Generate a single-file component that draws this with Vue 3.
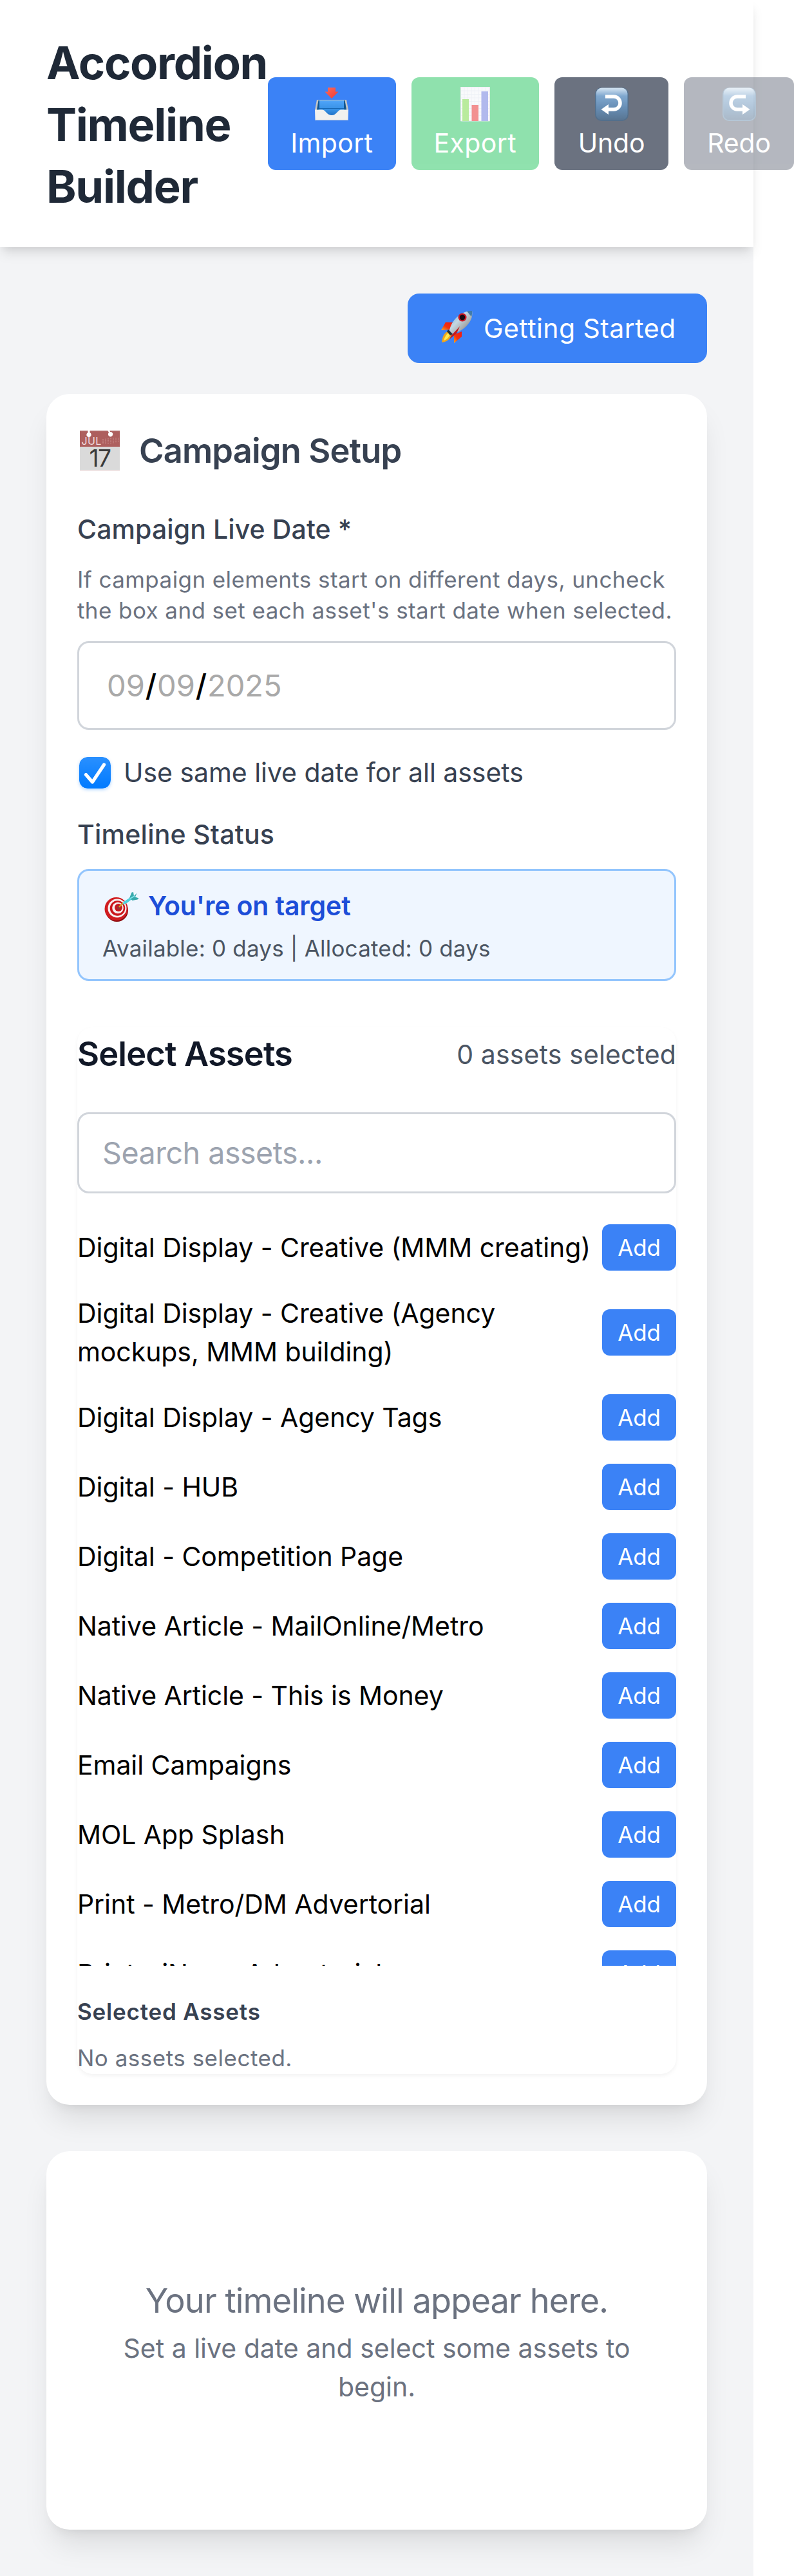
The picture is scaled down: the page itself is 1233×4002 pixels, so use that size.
<script setup>
const assets = [
  'Digital Display - Creative (MMM creating)',
  'Digital Display - Creative (Agency mockups, MMM building)',
  'Digital Display - Agency Tags',
  'Digital - HUB',
  'Digital - Competition Page',
  'Native Article - MailOnline/Metro',
  'Native Article - This is Money',
  'Email Campaigns',
  'MOL App Splash',
  'Print - Metro/DM Advertorial',
  'Print - iNews Advertorial',
]
</script>

<template>
  <div class="page">
    <header class="header">
      <h1 class="title">Accordion Timeline Builder</h1>
      <div class="actions">
        <button class="action import">
          <svg class="glyph" width="54" height="54" viewBox="0 0 54 54">
            <defs>
              <linearGradient id="trayIn" x1="0" y1="0" x2="0" y2="1"><stop offset="0" stop-color="#50a5fa" /><stop offset=".65" stop-color="#348ee2" /><stop offset="1" stop-color="#1d6fc4" /></linearGradient>
              <linearGradient id="arrowRed" x1="0" y1="0" x2="1" y2="1"><stop offset="0" stop-color="#ff6b5a" /><stop offset="1" stop-color="#ee3a36" /></linearGradient>
            </defs>
            <path d="M4 20h46l3 16H1z" fill="#c5c5c3" />
            <path d="M6.500 21h41l2.500 15-14 9H18L4 36z" fill="url(#trayIn)" />
            <path d="M6.500 21L4 36l4-1V21zM47.500 21L50 36l-4-1V21z" fill="#14568f" />
            <path d="M8 33.500h38" stroke="#1768b5" stroke-width="1" />
            <path d="M1 35.500h11c6 0 7 8.500 15 8.500s9-8.500 15-8.500h11L52.500 52h-51z" fill="#f1f1ef" />
            <path d="M1.500 51.500h51" stroke="#d2d2d0" stroke-width="1" />
            <path d="M21 1h12v6.500h4.500L27 18 16.500 7.500H21z" fill="url(#arrowRed)" />
          </svg>
          <span>Import</span>
        </button>
        <button class="action export faded">
          <svg class="glyph" width="54" height="54" viewBox="0 0 54 54">
            <path d="M4.500 0h45v53h-45z" fill="#f5f6fb" stroke="#cdd0d8" />
            <path d="M10 0v53M15.500 0v53M21 0v53M26.500 0v53M32 0v53M37.500 0v53M43 0v53M5 6h44M5 11.500h44M5 17h44M5 22.500h44M5 28h44M5 33.500h44M5 39h44M5 44.500h44" stroke="#dce2ee" stroke-width=".8" />
            <path d="M7 19h10v34H7z" fill="#76d83d" />
            <path d="M21.500 28h10.500v25H21.500z" fill="#e72326" />
            <path d="M36.500 7H47v46H36.500z" fill="#6575dc" />
          </svg>
          <span>Export</span>
        </button>
        <button class="action undo">
          <svg class="glyph" width="54" height="54" viewBox="0 0 54 54">
            <defs>
              <linearGradient id="keyBlue" x1="0" y1="0" x2="0" y2="1"><stop offset="0" stop-color="#d7e6f3" /><stop offset=".25" stop-color="#80a8cf" /><stop offset=".6" stop-color="#688fb6" /><stop offset="1" stop-color="#587592" /></linearGradient>
            </defs>
            <rect x="1" y="1" width="52" height="52" rx="10" fill="#526f8c" />
            <rect x="2.500" y="1.500" width="49" height="50" rx="9" fill="url(#keyBlue)" />
            <path d="M17 15h13a10 10 0 0 1 0 20h-9" fill="none" stroke="#fff" stroke-width="5.500" />
            <path d="M10.500 35L22 27v16z" fill="#fff" />
          </svg>
          <span>Undo</span>
        </button>
        <button class="action undo faded">
          <svg class="glyph" width="54" height="54" viewBox="0 0 54 54">
            <rect x="1" y="1" width="52" height="52" rx="10" fill="#6f92b2" />
            <rect x="2.500" y="1.500" width="49" height="50" rx="9" fill="url(#keyBlue)" />
            <path d="M37 15H24a10 10 0 0 0 0 20h9" fill="none" stroke="#fff" stroke-width="5.500" />
            <path d="M43.500 35L32 27v16z" fill="#fff" />
          </svg>
          <span>Redo</span>
        </button>
      </div>
    </header>

    <main class="main">
      <button class="start">
        <svg width="56" height="54" viewBox="0 0 56 54">
          <defs>
            <linearGradient id="hull" x1="0" y1="0" x2="1" y2="1"><stop offset="0" stop-color="#5d9dd0" /><stop offset=".4" stop-color="#c4d7e2" /><stop offset=".65" stop-color="#a9adae" /><stop offset="1" stop-color="#39566d" /></linearGradient>
            <linearGradient id="fin" x1="1" y1="0" x2="0" y2="1"><stop offset="0" stop-color="#f01812" /><stop offset=".6" stop-color="#f2330d" /><stop offset="1" stop-color="#ffb01c" /></linearGradient>
          </defs>
          <path d="M23 19L9 18.500 2 31l14-1z" fill="url(#fin)" />
          <path d="M34 33v8L22 51V38z" fill="url(#fin)" />
          <path d="M15 32c-8 2-11 8-12 18 8-1 14-5 16-14z" fill="#f0a51c" />
          <path d="M15 34c-5 3-7 7-9 13 6-2 9-6 11-12z" fill="#ffea50" />
          <path d="M15 31C18 16 32 1 50 1c3 15-11 31-31 36z" fill="url(#hull)" />
          <path d="M42 1.500c3-.7 5-.5 8-.5.500 3 0 6-1 9z" fill="#3f7cae" />
          <path d="M13 30l7 7-4 2-5-6z" fill="#222f3b" />
          <path d="M31 25L18 39l-3 6 11-9z" fill="#c5191a" />
          <circle cx="35" cy="11" r="6.500" fill="#c91622" />
          <circle cx="35" cy="11" r="4.200" fill="#180a12" />
        </svg>
        <span>Getting Started</span>
      </button>

      <section class="card">
        <h2 class="heading setup">
          <svg width="64" height="64" viewBox="0 0 64 64">
            <path d="M1 1h62v62H1z" fill="#dadada" />
            <path d="M1 1h62v25H1z" fill="#ad5f5e" />
            <path d="M1 1h62M1 62.500h62" stroke="#e2cccc" />
            <path d="M13.500 0h3v4a3.700 3.700 0 1 1-3 0zM44 0h3l1 3a3.700 3.700 0 1 1-2 1z" fill="#fff" />
            <path d="M37 14v8M41 13.500v8.500M45 13v9M49 12.500v9M53 12v8.500M57 12v7.500M61 12v6" stroke="#c98c8b" stroke-width="1.300" stroke-dasharray="1.500 .9" />
            <text x="3.500" y="22.500" class="month">JUL</text>
            <text x="32" y="56.500" text-anchor="middle" class="day">17</text>
          </svg>
          <span>Campaign Setup</span>
        </h2>

        <div class="label">Campaign Live Date *</div>
        <p class="help">If campaign elements start on different days, uncheck<br />the box and set each asset's start date when selected.</p>
        <div class="date"><span>09</span><b>/</b><span>09</span><b>/</b><span>2025</span></div>

        <div class="check-row">
          <svg class="check" width="49" height="49" viewBox="0 0 49 49">
            <defs>
              <linearGradient id="box" x1="0" y1="0" x2="0" y2="1"><stop offset="0" stop-color="#2a90ff" /><stop offset="1" stop-color="#007aff" /></linearGradient>
            </defs>
            <rect width="49" height="49" rx="13" fill="url(#box)" />
            <path d="M10.500 27.500L20.500 39 38.500 12" fill="none" stroke="#fff" stroke-width="5.200" stroke-linecap="round" stroke-linejoin="round" />
          </svg>
          <span>Use same live date for all assets</span>
        </div>

        <div class="label status-label">Timeline Status</div>
        <div class="status">
          <div class="status-title">
            <svg width="54" height="48" viewBox="0 0 54 48">
              <circle cx="19.500" cy="29.500" r="17.500" fill="#8d0d12" />
              <circle cx="18.500" cy="27" r="18" fill="#d01c20" />
              <circle cx="20" cy="26" r="14.500" fill="#f7eeee" />
              <circle cx="20.500" cy="26" r="11.800" fill="#cb161b" />
              <circle cx="21" cy="25.500" r="8.800" fill="#f7eeee" />
              <circle cx="22" cy="25" r="6" fill="#cb161b" />
              <circle cx="22.500" cy="25" r="3.200" fill="#9f3236" />
              <path d="M23 24l6-6" stroke="#d9a620" stroke-width="2.200" />
              <path d="M28 20.500L30 16l12-8 2 3-9 7z" fill="#4fd0dc" />
              <path d="M39 10L42.500 1.500 45 1l1 6 4.500-4.500L48 8.500l5.500 2-2 2-8 1.500z" fill="#37a9ac" />
              <path d="M40 11l7-4" stroke="#7de4ea" stroke-width="2" />
            </svg>
            <span>You're on target</span>
          </div>
          <div class="status-detail">Available: 0 days | Allocated: 0 days</div>
        </div>

        <div class="assets">
          <div class="assets-head">
            <h3 class="heading dark">Select Assets</h3>
            <span class="count">0 assets selected</span>
          </div>
          <div class="search">Search assets...</div>
          <ul class="list">
            <li v-for="name in assets" :key="name" class="row">
              <span class="name">{{ name }}</span>
              <button class="add">Add</button>
            </li>
          </ul>
          <h4 class="selected-title">Selected Assets</h4>
          <p class="none">No assets selected.</p>
        </div>
      </section>

      <section class="card empty">
        <p class="empty-title">Your timeline will appear here.</p>
        <p class="empty-text">Set a live date and select some assets to begin.</p>
      </section>
    </main>
  </div>
</template>

<style>
body {
  margin: 0;
  background: #fff;
}
</style>

<style scoped>
* {
  box-sizing: border-box;
}
.page {
  width: 1170px;
  height: 4002px;
  background: #f3f4f6;
  font-family: Inter, "Liberation Sans", sans-serif;
  font-size: 41px;
  line-height: 60px;
  color: #000;
}
h1, h2, h3, h4, p, ul {
  margin: 0;
  padding: 0;
}
svg {
  display: block;
  flex: none;
}
button {
  border: 0;
  padding: 0;
  margin: 0;
  font: inherit;
  color: #fff;
  background: #3b82f6;
  flex: none;
}
.header {
  position: relative;
  display: flex;
  align-items: center;
  height: 384px;
  padding: 48px 72px;
  background: #fff;
  box-shadow: 0 12px 18px -3px rgba(0, 0, 0, .1), 0 6px 12px -6px rgba(0, 0, 0, .1);
}
.title {
  flex: 0 0 344px;
  padding-top: 3px;
  font-size: 70.500px;
  line-height: 96px;
  font-weight: 700;
  letter-spacing: -1.300px;
  color: #1f2937;
}
.actions {
  display: flex;
  gap: 24px;
  flex: none;
}
.action {
  display: flex;
  flex-direction: column;
  align-items: center;
  width: 198.500px;
  height: 144px;
  padding: 12px 0;
  border-radius: 12px;
  letter-spacing: .35px;
}
.action .glyph {
  margin: 3px 0;
}
.export {
  background: #22c55e;
}
.undo {
  width: 177px;
  background: #6b7280;
  letter-spacing: -.2px;
}
.undo.faded {
  width: 171px;
}
.faded {
  opacity: .5;
}
.main {
  display: flex;
  flex-direction: column;
  padding: 72px;
}
.start {
  align-self: flex-end;
  display: flex;
  align-items: center;
  width: 465px;
  height: 108px;
  padding: 0 48px;
  margin-bottom: 48px;
  border-radius: 18px;
  letter-spacing: .42px;
}
.start svg {
  margin: -2px 12px 0 2px;
}
.start span {
  white-space: nowrap;
}
.card {
  padding: 48px;
  border-radius: 36px;
  background: #fff;
  box-shadow: 0 30px 45px -9px rgba(0, 0, 0, .1), 0 12px 18px -12px rgba(0, 0, 0, .1);
}
.heading {
  font-size: 52.400px;
  line-height: 84px;
  font-weight: 600;
  letter-spacing: -.85px;
}
.setup {
  display: flex;
  align-items: center;
  gap: 29px;
  height: 84px;
  padding-left: 3px;
  margin-bottom: 48px;
  color: #374151;
}
.setup span {
  margin-top: -4px;
}
.setup svg {
  margin-top: -4px;
}
.month {
  font: 400 16px Inter, sans-serif;
  letter-spacing: .4px;
  fill: #f3dede;
}
.day {
  font: 400 37px Inter, sans-serif;
  letter-spacing: -1.500px;
  fill: #3a3a3a;
}
.label {
  font-weight: 500;
  letter-spacing: .1px;
  color: #374151;
}
.help {
  margin: 24px 0;
  font-size: 35px;
  line-height: 48px;
  letter-spacing: .42px;
  white-space: nowrap;
  color: #6b7280;
}
.date {
  display: flex;
  align-items: center;
  height: 138px;
  padding-left: 43px;
  border: 3px solid #d1d5db;
  border-radius: 18px;
  font-size: 47px;
  color: #a9a9a9;
}
.date b {
  width: 19px;
  text-align: center;
  font-weight: 500;
  color: #000;
}
.date span {
  width: 59px;
}
.check-row {
  display: flex;
  align-items: center;
  gap: 20px;
  height: 60px;
  margin: 36px 0;
  padding-left: 3px;
  color: #374151;
}
.check {
  border-radius: 13px;
  box-shadow: 0 2px 5px rgba(0, 122, 255, .3);
}
.check-row span {
  letter-spacing: -.05px;
}
.status-label {
  letter-spacing: .24px;
}
.status {
  height: 174px;
  margin: 24px 0 72px;
  padding: 24px 36px;
  border: 3px solid #93c5fd;
  border-radius: 18px;
  background: #eff6ff;
}
.status-title {
  display: flex;
  align-items: center;
  gap: 14px;
  height: 60px;
  padding-left: 3px;
  font-weight: 600;
  letter-spacing: -.15px;
  color: #1d4ed8;
}
.status-title svg {
  margin-top: 4px;
}
.status-detail {
  margin-top: 12px;
  font-size: 35px;
  line-height: 48px;
  letter-spacing: .2px;
  color: #4b5563;
}
.assets {
  height: 1626px;
  border-radius: 24px;
  background: #fff;
  box-shadow: 0 3px 6px rgba(0, 0, 0, .05);
}
.assets-head {
  display: flex;
  align-items: center;
  justify-content: space-between;
  height: 84px;
  margin-bottom: 48px;
}
.dark {
  margin-top: -2px;
  color: #111827;
}
.count {
  letter-spacing: .13px;
  color: #4b5563;
}
.search {
  display: flex;
  align-items: center;
  height: 126px;
  padding-left: 36px;
  margin-bottom: 48px;
  border: 3px solid #d1d5db;
  border-radius: 18px;
  background: #fff;
  font-size: 46.600px;
  letter-spacing: -.5px;
  color: #9ca3af;
}
.list {
  display: flex;
  flex-direction: column;
  gap: 36px;
  height: 1152px;
  overflow: hidden;
  list-style: none;
}
.row {
  flex: none;
  display: flex;
  align-items: center;
  justify-content: space-between;
  min-height: 72px;
}
.name {
  max-width: 803px;
  letter-spacing: -.07px;
}
.add {
  width: 115px;
  height: 72px;
  border-radius: 12px;
  font-size: 35px;
  line-height: 48px;
  letter-spacing: -.2px;
}
.selected-title {
  margin: 47px 0 25px;
  font-size: 35px;
  line-height: 48px;
  font-weight: 600;
  letter-spacing: .8px;
  color: #374151;
}
.none {
  font-size: 35px;
  line-height: 48px;
  margin-top: -1px;
  letter-spacing: .5px;
  color: #6b7280;
}
.empty {
  display: flex;
  flex-direction: column;
  justify-content: center;
  height: 588px;
  margin-top: 72px;
  padding: 0 96px;
  text-align: center;
  color: #6b7280;
}
.empty-title {
  margin: -2px 0 2px;
  font-size: 52.400px;
  line-height: 84px;
  letter-spacing: -.9px;
}
</style>
